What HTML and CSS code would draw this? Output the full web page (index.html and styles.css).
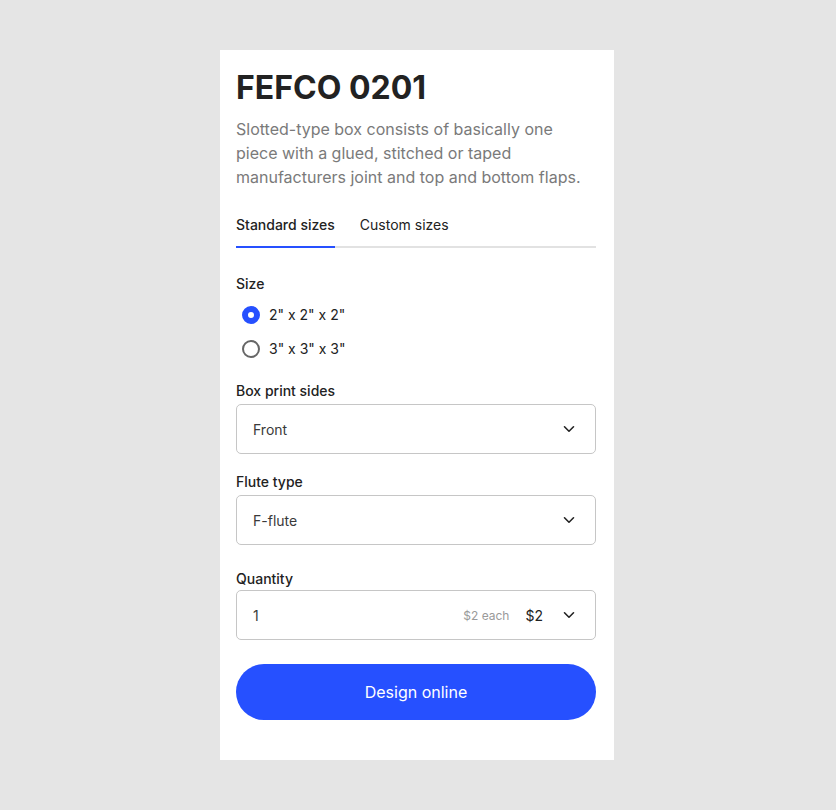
FILE: index.html
```html
<!DOCTYPE html>
<html lang="en">
<head>
<meta charset="utf-8">
<title>FEFCO 0201</title>
<link rel="stylesheet" href="styles.css">
</head>
<body>
<main class="card">
  <h1 class="title">FEFCO 0201</h1>
  <p class="desc">Slotted-type box consists of basically one piece with a glued, stitched or taped manufacturers joint and top and bottom flaps.</p>
  <nav class="tabs">
    <span class="tab active">Standard sizes</span>
    <span class="tab">Custom sizes</span>
  </nav>

  <section class="field size-field">
    <div class="label">Size</div>
    <div class="radios">
      <label class="radio"><span class="dot checked"></span><span>2" x 2" x 2"</span></label>
      <label class="radio"><span class="dot"></span><span>3" x 3" x 3"</span></label>
    </div>
  </section>

  <section class="field print-field">
    <div class="label">Box print sides</div>
    <div class="select">
      <span class="value">Front</span>
      <svg class="chev" width="12" height="8" viewBox="0 0 12 8"><path d="M1.5 1.8 L6 6.2 L10.5 1.8" fill="none" stroke="#222" stroke-width="1.6" stroke-linecap="round" stroke-linejoin="round"/></svg>
    </div>
  </section>

  <section class="field flute-field">
    <div class="label">Flute type</div>
    <div class="select">
      <span class="value">F-flute</span>
      <svg class="chev" width="12" height="8" viewBox="0 0 12 8"><path d="M1.5 1.8 L6 6.2 L10.5 1.8" fill="none" stroke="#222" stroke-width="1.6" stroke-linecap="round" stroke-linejoin="round"/></svg>
    </div>
  </section>

  <section class="field qty-field">
    <div class="label">Quantity</div>
    <div class="select">
      <span class="value">1</span>
      <span class="each">$2 each</span>
      <span class="total">$2</span>
      <svg class="chev" width="12" height="8" viewBox="0 0 12 8"><path d="M1.5 1.8 L6 6.2 L10.5 1.8" fill="none" stroke="#222" stroke-width="1.6" stroke-linecap="round" stroke-linejoin="round"/></svg>
    </div>
  </section>

  <button class="cta">Design online</button>
</main>
</body>
</html>
```

FILE: styles.css
```css
* { box-sizing: border-box; }
html, body { margin: 0; padding: 0; }
body {
  background: #e5e5e5;
  font-family: Inter, "Noto Sans", sans-serif;
  color: #222;
  min-height: 810px;
}
.card {
  width: 394px;
  margin: 50px auto 0 220px;
  background: #fff;
  padding: 18px 18px 40px 16px;
  display: flex;
  flex-direction: column;
}
.title {
  margin: 0;
  font-size: 32px;
  line-height: 40px;
  font-weight: 700;
  color: #222;
}
.desc {
  margin: 9px 0 0;
  font-size: 16px;
  line-height: 24px;
  color: #7a7a7a;
}
.tabs {
  margin-top: 26px;
  display: flex;
  gap: 25px;
  border-bottom: 2px solid #e2e2e2;
}
.tab {
  font-size: 14px;
  line-height: 20px;
  padding-bottom: 11px;
  color: #222;
  margin-bottom: -2px;
  border-bottom: 2px solid transparent;
}
.tab.active {
  font-weight: 500;
  border-bottom-color: #2650ff;
}
.field { display: flex; flex-direction: column; }
.label {
  font-size: 14px;
  line-height: 20px;
  font-weight: 500;
  color: #222;
  margin-bottom: 3px;
}
.size-field { margin-top: 26px; }
.size-field .label { margin-bottom: 11px; }
.radios { display: flex; flex-direction: column; gap: 14px; padding-left: 6px; }
.radio {
  display: flex;
  align-items: center;
  gap: 9px;
  font-size: 14px;
  line-height: 20px;
  color: #222;
}
.dot {
  width: 18px;
  height: 18px;
  border-radius: 50%;
  border: 2px solid #666;
  background: #fff;
  flex: none;
}
.dot.checked {
  border: 6px solid #2650ff;
}
.print-field { margin-top: 22px; }
.flute-field { margin-top: 18px; }
.qty-field { margin-top: 24px; }
.qty-field .label { margin-bottom: 1px; }
.select {
  height: 50px;
  border: 1px solid #c6c6c6;
  border-radius: 5px;
  display: flex;
  align-items: center;
  padding: 0 20px 0 16px;
  font-size: 14px;
  color: #222;
}
.select .value { flex: 1; color: #3a3a3a; }
.each { font-size: 12px; color: #9a9a9a; margin-right: 16px; }
.total { font-size: 14px; margin-right: 20px; color: #222; }
.chev { flex: none; }
.cta {
  margin-top: 24px;
  height: 56px;
  border: none;
  border-radius: 28px;
  background: #2650ff;
  color: #fff;
  font-family: Inter, "Noto Sans", sans-serif;
  font-size: 16px;
  font-weight: 400;
  cursor: pointer;
}
```
